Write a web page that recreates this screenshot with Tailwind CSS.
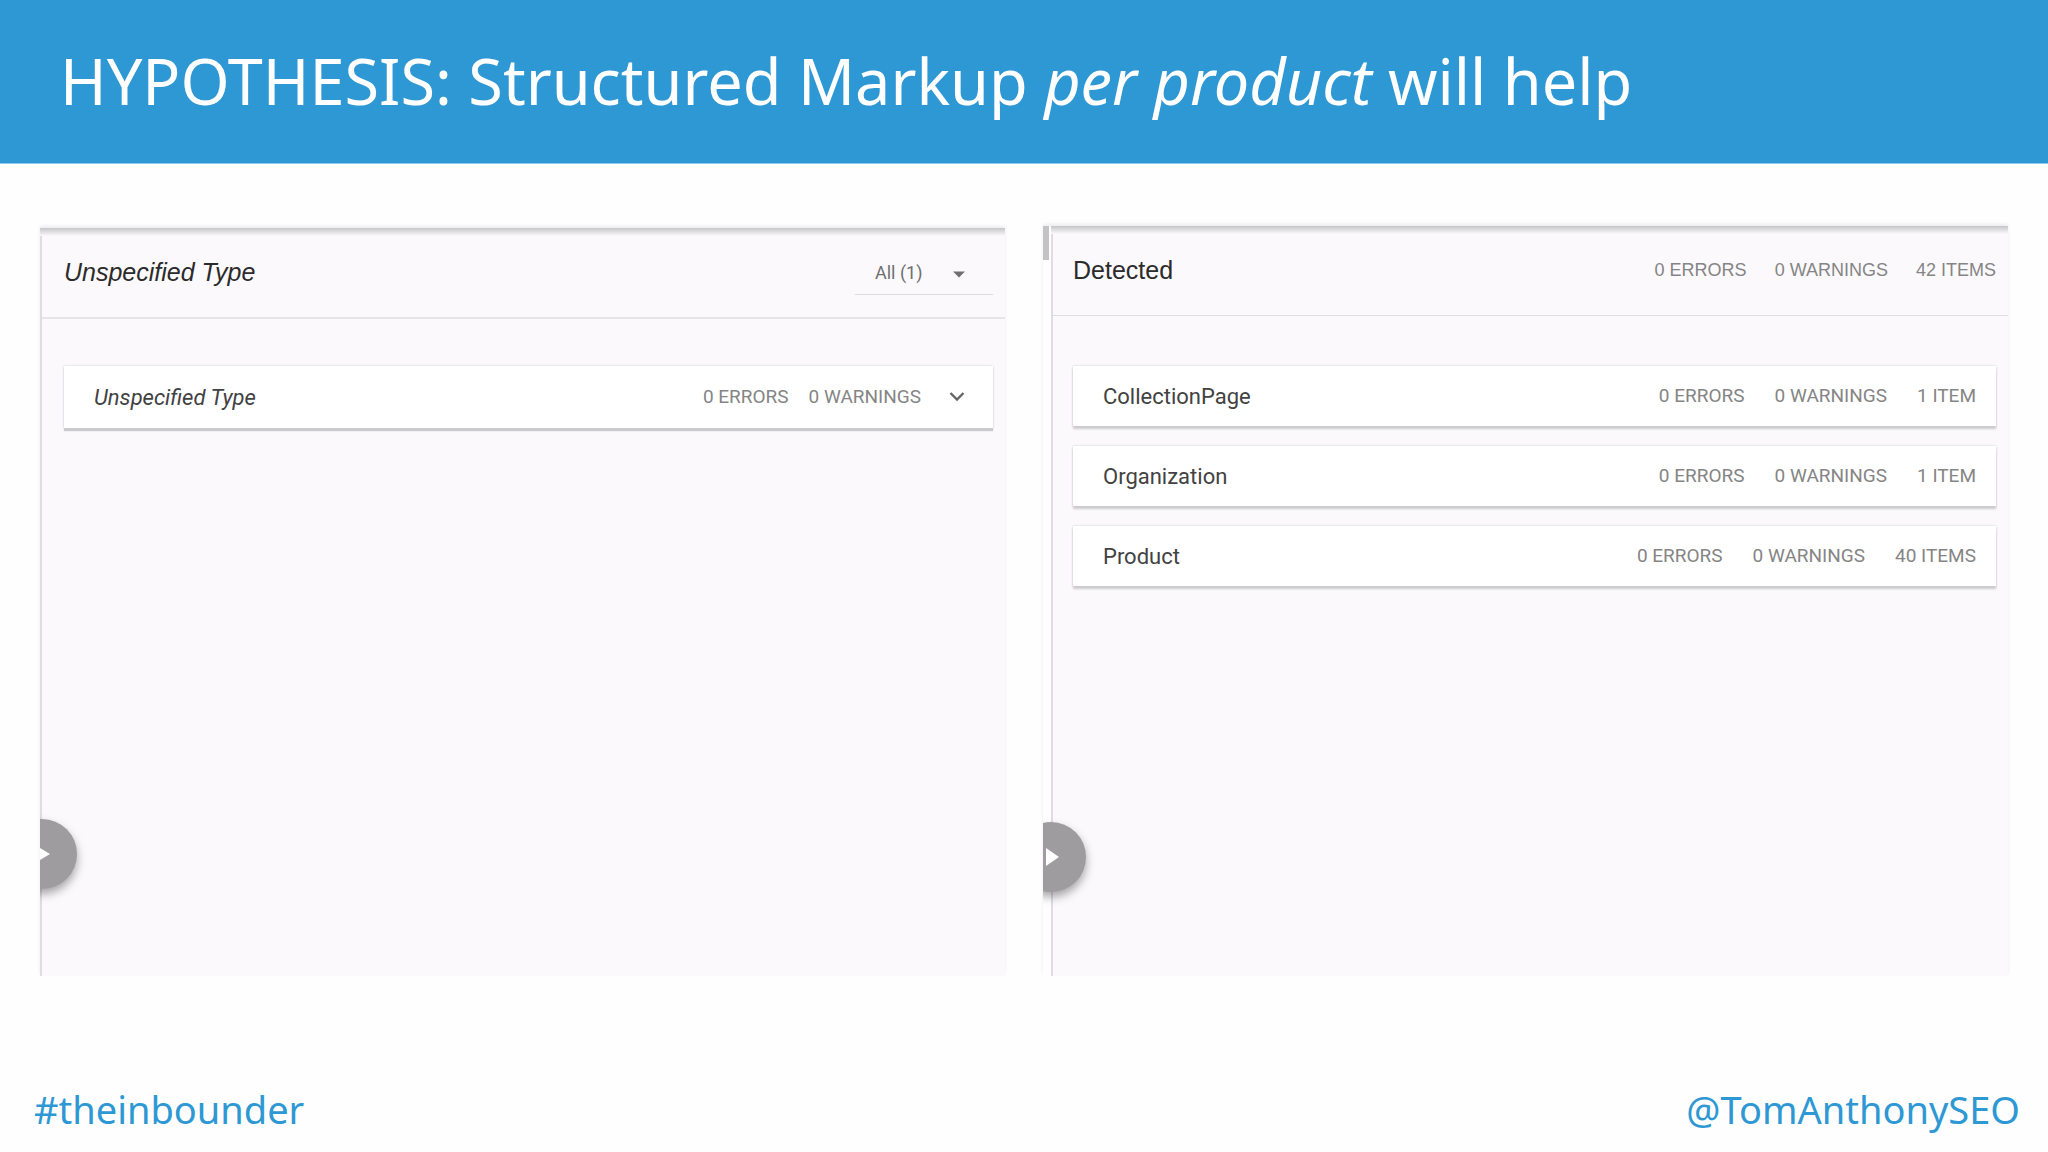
<!DOCTYPE html>
<html lang="en">

<head>
    <meta charset="UTF-8">
    <meta name="viewport" content="width=device-width, initial-scale=1.0">
    <script src="https://cdn.jsdelivr.net/npm/@tailwindcss/browser@4"></script>
    <title>HYPOTHESIS: Structured Markup per product will help</title>
</head>

<body class="flex min-h-screen flex-col bg-[#fefefe] font-['Noto_Sans',sans-serif]">

    <header class="flex h-41 items-center border-b border-[#8fcdf0] bg-[#2d98d3] px-15 pb-0.5">
        <h1 class="text-[63px] leading-none whitespace-nowrap text-white">HYPOTHESIS: Structured Markup <em>per product</em> will help</h1>
    </header>

    <main class="grid grow grid-cols-2 gap-[38px] px-10 pt-[62px]">

        <!-- Before: no per-product markup -->
        <section class="relative mt-0.5 h-[748px] overflow-hidden shadow-[0_-2px_3px_#ececef]">
            <div class="h-full border-l-2 border-[#dedde0] bg-[#fbf9fc]">
                <div class="absolute inset-x-0 top-0 h-2 bg-linear-to-b from-[#c6c5c8] to-[#fbf9fc]"></div>

                <div class="flex h-[91px] items-center justify-between border-b-2 border-[#e5e4e7] pr-3 pl-[22px]">
                    <h2 class="font-['Liberation_Sans',sans-serif] text-[25px] text-[#2b2b2b] italic">Unspecified Type</h2>
                    <div class="relative">
                        <select aria-label="Filter items" class="h-11 w-[138px] appearance-none border-b border-[#dcdbde] bg-transparent pl-5 font-['Roboto',sans-serif] text-[18px] text-[#6f6f6f]">
                            <option>All (1)</option>
                        </select>
                        <svg class="pointer-events-none absolute top-5 right-7 h-[7px] w-3" viewBox="0 0 12 7" fill="#6f6f6f">
                            <path d="M0 0.5h12L6 6.5z" />
                        </svg>
                    </div>
                </div>

                <div class="pt-[47px] pr-3 pl-[22px] font-['Roboto',sans-serif]">
                    <button type="button" class="flex h-[62px] w-full items-center bg-white pr-7 pl-[30px] shadow-[0_3px_1px_#cbcacd,0_0_2px_#cbcacd]">
                        <span class="grow text-left text-[22px] text-[#424242] italic">Unspecified Type</span>
                        <span class="flex gap-5 text-[19px] text-[#858585]">
                            <span>0 ERRORS</span>
                            <span>0 WARNINGS</span>
                        </span>
                        <svg class="ml-7 h-[10px] w-4" viewBox="0 0 16 10" fill="none" stroke="#666666" stroke-width="2.4">
                            <path d="M1.5 1L8 7.5L14.5 1" />
                        </svg>
                    </button>
                </div>
            </div>

            <button type="button" aria-label="Expand panel" class="absolute top-[591px] -left-[33px] flex size-[70px] items-center justify-center rounded-full bg-[#9e9c9e] shadow-[0_5px_10px_#00000059]">
                <svg class="h-[18px] w-4" viewBox="0 0 16 18" fill="#ffffff">
                    <path d="M1 0L16 9L1 18z" />
                </svg>
            </button>
        </section>

        <!-- After: one Product item per product -->
        <section class="relative h-[750px] overflow-hidden pl-2 shadow-[0_-2px_3px_#ececef]">
            <div class="absolute top-0 left-0 h-[34px] w-[6px] bg-[#c3c2c5]"></div>

            <div class="h-full border-l-2 border-[#dedde0] bg-[#fbf9fc]">
                <div class="absolute top-0 right-0 left-2 h-2 bg-linear-to-b from-[#c6c5c8] to-[#fbf9fc]"></div>

                <div class="flex h-[90px] items-center justify-between border-b border-[#dedde0] pr-3 pl-5 font-['Liberation_Sans',sans-serif]">
                    <h2 class="text-[25px] text-[#2b2b2b]">Detected</h2>
                    <p class="flex gap-7 text-[18px] text-[#858585]">
                        <span>0 ERRORS</span>
                        <span>0 WARNINGS</span>
                        <span>42 ITEMS</span>
                    </p>
                </div>

                <div class="flex flex-col gap-5 pt-[50px] pr-3 pl-5 font-['Roboto',sans-serif]">
                    <button type="button" class="flex h-15 w-full items-center bg-white pr-5 pl-[30px] shadow-[0_3px_2px_#cbcacd,0_0_2px_#cbcacd]">
                        <span class="grow text-left text-[22px] text-[#424242]">CollectionPage</span>
                        <span class="flex gap-[30px] text-[19px] text-[#858585]">
                            <span>0 ERRORS</span>
                            <span>0 WARNINGS</span>
                            <span>1 ITEM</span>
                        </span>
                    </button>
                    <button type="button" class="flex h-15 w-full items-center bg-white pr-5 pl-[30px] shadow-[0_3px_2px_#cbcacd,0_0_2px_#cbcacd]">
                        <span class="grow text-left text-[22px] text-[#424242]">Organization</span>
                        <span class="flex gap-[30px] text-[19px] text-[#858585]">
                            <span>0 ERRORS</span>
                            <span>0 WARNINGS</span>
                            <span>1 ITEM</span>
                        </span>
                    </button>
                    <button type="button" class="flex h-15 w-full items-center bg-white pr-5 pl-[30px] shadow-[0_3px_2px_#cbcacd,0_0_2px_#cbcacd]">
                        <span class="grow text-left text-[22px] text-[#424242]">Product</span>
                        <span class="flex gap-[30px] text-[19px] text-[#858585]">
                            <span>0 ERRORS</span>
                            <span>0 WARNINGS</span>
                            <span>40 ITEMS</span>
                        </span>
                    </button>
                </div>
            </div>

            <button type="button" aria-label="Expand panel" class="absolute top-[596px] -left-[27px] flex size-[70px] items-center justify-center rounded-full bg-[#9e9c9e] shadow-[0_5px_10px_#00000059]">
                <svg class="h-[18px] w-4" viewBox="0 0 16 18" fill="#ffffff">
                    <path d="M3 0L16 9L3 18z" />
                </svg>
            </button>
        </section>

    </main>

    <footer class="flex items-center justify-between pr-7 pb-3.5 pl-[34px] text-[38px] text-[#2d98d3]">
        <a href="#theinbounder">#theinbounder</a>
        <a href="#TomAnthonySEO">@TomAnthonySEO</a>
    </footer>

</body>

</html>
